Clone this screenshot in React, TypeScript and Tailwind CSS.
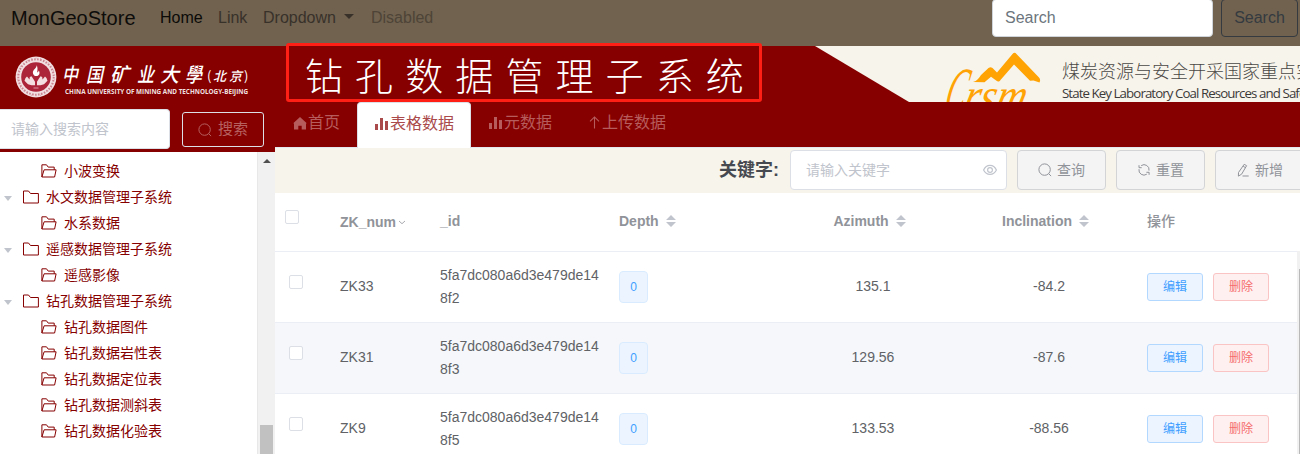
import React from "react";

const SANS = "font-['Liberation_Sans','Noto_Sans_CJK_SC',sans-serif]";

function FolderClosed() {
  return (
    <svg width="16" height="14" viewBox="0 0 16 14" fill="none" stroke="#860000" strokeWidth="1">
      <path d="M.5 13V1h5l2 2.5h7.9V13z" />
    </svg>
  );
}

function FolderOpen() {
  return (
    <svg width="16" height="14" viewBox="0 0 16 14" fill="none" stroke="#860000" strokeWidth="1">
      <path d="M.9 13V.8h4.600l1.700 2.300h6v2.700M.9 13l2.200-7.200h12L13.600 13z" />
    </svg>
  );
}

function SearchIcon() {
  return (
    <svg width="14" height="14" viewBox="0 0 14 14" fill="none" stroke="currentColor" strokeWidth="1">
      <circle cx="6.600" cy="6.600" r="5.700" />
      <path d="M10.700 10.700l2.400 2.400" />
    </svg>
  );
}

function RefreshIcon() {
  return (
    <svg width="14" height="14" viewBox="0 0 14 14" fill="none" stroke="currentColor" strokeWidth="1">
      <path d="M4.200 2.600A5 5 0 0 1 12 7.600M2 6.200a5 5 0 0 0 7.800 5M2 2.200v2.500h2.700M12.100 11.800V9.300H9.400" />
    </svg>
  );
}

function EditIcon() {
  return (
    <svg width="14" height="14" viewBox="0 0 14 14" fill="none" stroke="currentColor" strokeWidth="1">
      <path d="M8.200 1.300l2.400 1.400-5 8.500-3.200 1.900.1-3.600zM7.200 3.300l2.400 1.400M6.500 13h6.200" />
    </svg>
  );
}

function EyeIcon() {
  return (
    <svg width="14" height="12" viewBox="0 0 14 12" fill="none" stroke="#c0c4cc" strokeWidth="1.200">
      <path d="M.6 6C3.400-.1 10.600-.1 13.400 6 10.600 11.800 3.400 11.800.6 6z" />
      <circle cx="7" cy="6" r="2.400" />
    </svg>
  );
}

function BarsIcon() {
  return (
    <svg className="-mt-px" width="13" height="13" viewBox="0 0 13 13" fill="currentColor">
      <path d="M0 7h3v6H0zM5 1h3v12H5zM10 4h3v9h-3z" />
    </svg>
  );
}

function HomeIcon() {
  return (
    <svg width="14" height="13" viewBox="0 0 14 13" fill="currentColor">
      <path d="M7 0l6.500 6v.6H13v5.900H8.700V8.700H5.300v3.800H1V6.600H.5V6z" />
    </svg>
  );
}

function UpIcon() {
  return (
    <svg className="-mt-[2px]" width="13" height="13" viewBox="0 0 13 13" fill="none" stroke="currentColor" strokeWidth="1.100">
      <path d="M6.500 12.500V1M2 5.300L6.500.9 11 5.300" />
    </svg>
  );
}

function SortCarets() {
  return (
    <svg className="ml-[7px]" width="10" height="12" viewBox="0 0 10 12" fill="#c0c4cc">
      <path d="M5 0l5 5H0zM5 12L0 7h10z" />
    </svg>
  );
}

function Emblem() {
  const ring = Array.from({ length: 26 }, (_, i) => (i * 360) / 26);
  return (
    <svg width="42" height="42" viewBox="0 0 42 42">
      <circle cx="21" cy="21" r="20.400" fill="#f1dfe2" />
      <circle cx="21" cy="21" r="17.700" fill="none" stroke="#cb8591" strokeWidth="2" strokeDasharray="1.600 1.400" />
      {ring.map((a) => (
        <path key={a} d="M21 1.600v1.200" stroke="#d9a5ae" strokeWidth=".8" transform={`rotate(${a} 21 21)`} />
      ))}
      <circle cx="21" cy="21" r="14.800" fill="#ac2439" />
      <path d="M21.500 9c1 3-4.500 4.500-3.500 8.500.4 1.700 1.700 2.600 3.200 2.600 2.700 0 4.300-2.600 2.600-5.600-.5 1.600-1.300 1.700-1.700 2.200.5-2.600.8-5.700-.6-7.700z" fill="#fff" />
      <path d="M10.500 22l1.500-1.500 2.500 3 .3-2.500 1.700-.8 2 3 1.500 2.500v3.500h-3.500l-3.500-1-3.500-3.500zM31.500 22L30 20.500l-2.500 3-.3-2.500-1.700-.8-2 3-1.500 2.500v3.500h3.500l3.500-1 3.500-3.500z" fill="#f3dde1" />
      <path d="M18.500 32h5" stroke="#d992a0" strokeWidth="1" />
    </svg>
  );
}

function UniversityLogo() {
  return (
    <div className="flex h-[63px] items-start pt-[10px] pl-[15px]">
      <Emblem />
      <svg className="ml-[7px] overflow-visible" width="190" height="44" viewBox="64 56 190 44" fill="#fff" fontFamily="'Noto Sans CJK SC', sans-serif">
        <g fontSize="20" fontWeight="500" fontStyle="italic">
          <text x="62" y="82" textLength="16" lengthAdjust="spacingAndGlyphs">中</text>
          <text x="86" y="82" textLength="17" lengthAdjust="spacingAndGlyphs">国</text>
          <text x="110" y="82" textLength="19" lengthAdjust="spacingAndGlyphs">矿</text>
          <text x="137" y="82" textLength="17" lengthAdjust="spacingAndGlyphs">业</text>
          <text x="160" y="82" textLength="19" lengthAdjust="spacingAndGlyphs">大</text>
          <text x="185" y="82" textLength="17" lengthAdjust="spacingAndGlyphs">學</text>
        </g>
        <g fontSize="13">
          <text x="207" y="81">(</text>
          <text x="213" y="81" fontWeight="500" fontStyle="italic">北</text>
          <text x="229" y="81" fontWeight="500" fontStyle="italic">京</text>
          <text x="244" y="81">)</text>
        </g>
        <text x="65" y="94.300" fontSize="7" fontWeight="700" fontFamily="'Open Sans', sans-serif" fillOpacity=".9" textLength="183" lengthAdjust="spacingAndGlyphs">
          CHINA UNIVERSITY OF MINING AND TECHNOLOGY-BEIJING
        </text>
      </svg>
    </div>
  );
}

function LabLogo() {
  return (
    <svg className="shrink-0" width="485" height="56" viewBox="815 46 485 56">
      <path d="M815 46H1300V102H909z" fill="#f7f4ec" />
      <path d="M973 82c4-1 6-4 8-7l7.500-7c2-1.500 3.500-.8 5 1l3.500 3.500L1012.500 54c1.500-1.600 2.800-1.400 4 0l22.500 23.500c1.400 1.300 1.400 3 .5 5l-6-2-3.500.3L1014 64.500 1000.500 80c-1.200 1.800-2.600 2-4 .8l-5.500-4-6.500 5.500z" fill="#ffa305" />
      <text transform="translate(942 113) skewX(-14)" fill="#ffa305" fontFamily="'Liberation Serif', serif" fontStyle="italic">
        <tspan fontSize="66" textLength="20" lengthAdjust="spacingAndGlyphs">C</tspan>
        <tspan x="19" fontSize="51" textLength="62" lengthAdjust="spacingAndGlyphs">rsm</tspan>
      </text>
      <text x="1062" y="78" fontSize="18" fill="#4a4845" fontWeight="300" fontFamily="'Noto Sans CJK SC', sans-serif">煤炭资源与安全开采国家重点实验室</text>
      <text x="1062" y="98" fontSize="13.300" fill="#3c3a38" fontFamily="'Open Sans', sans-serif" letterSpacing="-0.920">State Key Laboratory Coal Resources and Safe Mining</text>
    </svg>
  );
}

const tree = [
  { label: "小波变换", parent: false },
  { label: "水文数据管理子系统", parent: true },
  { label: "水系数据", parent: false },
  { label: "遥感数据管理子系统", parent: true },
  { label: "遥感影像", parent: false },
  { label: "钻孔数据管理子系统", parent: true },
  { label: "钻孔数据图件", parent: false },
  { label: "钻孔数据岩性表", parent: false },
  { label: "钻孔数据定位表", parent: false },
  { label: "钻孔数据测斜表", parent: false },
  { label: "钻孔数据化验表", parent: false },
];

const rows = [
  { num: "ZK33", id: "5fa7dc080a6d3e479de148f2", azimuth: "135.1", inclination: "-84.2" },
  { num: "ZK31", id: "5fa7dc080a6d3e479de148f3", azimuth: "129.56", inclination: "-87.6" },
  { num: "ZK9", id: "5fa7dc080a6d3e479de148f5", azimuth: "133.53", inclination: "-88.56" },
];

const GRID = "grid w-[1022px] grid-cols-[55px_103px_176px_176px_176px_176px_160px]";

function Navbar() {
  return (
    <header className="flex h-[46px] items-start bg-[#70624f] text-base leading-6">
      <span className="ml-[11px] mt-[3px] w-[149px] text-[20px] leading-[30px] text-[#0d0c0a]">MonGeoStore</span>
      <span className="mt-[6px] w-[58px] text-[#0b0a08]">Home</span>
      <span className="mt-[6px] w-[45px] text-[#38312a]">Link</span>
      <span className="mt-[6px] flex w-[108px] items-center text-[#38312a]">
        Dropdown
        <svg className="ml-[8px] -mt-[3px]" width="10" height="5" viewBox="0 0 10 5" fill="currentColor"><path d="M0 0h10L5 5z" /></svg>
      </span>
      <span className="mt-[6px] text-[#4e4437]">Disabled</span>
      <div className="-mt-px ml-auto h-[38px] w-[221px] rounded border border-[#ced4da] bg-white px-3 py-[6px] text-[#6c757d]">Search</div>
      <div className="-mt-px ml-2 mr-[2px] h-[38px] w-[77px] rounded border border-[#343a40] py-[6px] text-center text-[#343a40]">Search</div>
    </header>
  );
}

function Sidebar() {
  return (
    <aside className="flex w-[275px] shrink-0 flex-col">
      <div className="h-[106px] bg-[#860000]">
        <UniversityLogo />
        <div className="flex">
          <div className="h-10 w-[170px] rounded-r border border-l-0 border-[#dcdfe6] bg-white pl-[11px] text-sm leading-[38px] text-[#c0c4cc]">请输入搜索内容</div>
          <div className="ml-3 mt-[3px] flex h-[35px] w-[82px] items-center justify-center gap-[6px] rounded-[3px] border border-[#dcdfe6] text-[15px] text-[#b66060]">
            <SearchIcon />
            <span>搜索</span>
          </div>
        </div>
      </div>
      <div className="flex min-h-0 flex-1">
        <div className="flex-1 pt-[6px]">
          {tree.map((n) => (
            <div key={n.label} className={n.parent ? "flex h-[26px] items-center pl-1" : "flex h-[26px] items-center pl-[41px]"}>
              {n.parent && (
                <svg className="mr-[11px] mt-[3px]" width="8" height="5" viewBox="0 0 8 5" fill="#c0c4cc"><path d="M0 0h8L4 5z" /></svg>
              )}
              <span className="-mt-px">{n.parent ? <FolderClosed /> : <FolderOpen />}</span>
              <span className="ml-[7px] text-sm text-[#860000]">{n.label}</span>
            </div>
          ))}
        </div>
        <div className="flex w-[18px] flex-col items-center border-l border-[#e8e8e8] bg-[#f1f1f1] pt-[7px]">
          <svg width="8" height="4" viewBox="0 0 8 4" fill="#505050"><path d="M4 0l4 4H0z" /></svg>
          <div className="mt-auto h-[29px] w-[13px] bg-[#c1c1c1]" />
        </div>
      </div>
    </aside>
  );
}

function Tabs() {
  return (
    <nav className="flex h-[46px] border-b border-[#e4e7ed] bg-[#860000] text-base text-[#b65c5c]">
      <div className="flex w-[82px] items-center pb-[3px] pl-[18px]"><HomeIcon /><span className="ml-px">首页</span></div>
      <div className="flex h-[46px] w-[114px] items-center rounded-t border border-b-0 border-[#dcdfe6] bg-white pb-[4px] pl-[17px] text-[#aa4a4a]"><BarsIcon /><span className="ml-[2px]">表格数据</span></div>
      <div className="flex w-[99px] items-center pb-[3px] pl-[18px]"><BarsIcon /><span className="ml-[2px]">元数据</span></div>
      <div className="flex items-center pb-[3px] pl-[18px]"><UpIcon /><span className="ml-px">上传数据</span></div>
    </nav>
  );
}

function ToolButton({ icon, label, className }: { icon: React.ReactNode; label: string; className: string }) {
  return (
    <div className={`${className} flex h-10 w-[89px] shrink-0 items-center justify-center gap-[5px] rounded border border-[#d3d4d6] bg-[#f4f4f5] text-sm text-[#909399]`}>
      {icon}
      <span>{label}</span>
    </div>
  );
}

function FilterBar() {
  return (
    <div className="flex h-[45px] shrink-0 overflow-hidden bg-[#f7f4ec] pl-[444px] pt-[2px]">
      <span className="w-[71px] shrink-0 text-lg font-bold leading-[40px] text-[#464a50]">关键字:</span>
      <div className="flex h-10 w-[217px] shrink-0 items-center justify-between rounded border border-[#dcdfe6] bg-white pl-[15px] pr-[9px] text-sm text-[#c0c4cc]">
        <span>请输入关键字</span>
        <EyeIcon />
      </div>
      <ToolButton className="ml-[10px]" icon={<SearchIcon />} label="查询" />
      <ToolButton className="ml-[10px]" icon={<RefreshIcon />} label="重置" />
      <ToolButton className="ml-[10px]" icon={<EditIcon />} label="新增" />
    </div>
  );
}

function DataTable() {
  return (
    <div className="flex min-h-0 flex-1 overflow-hidden bg-white text-sm text-[#606266]">
      <div className="w-[1022px] shrink-0">
        <div className={`${GRID} h-[59px] items-center border-b border-[#ebeef5] font-bold leading-[23px] text-[#909399]`}>
          <div className="mb-[10px] ml-[10px] size-[14px] rounded-[2px] border border-[#dcdfe6]" />
          <div className="flex items-center pl-[10px]">
            ZK_num
            <svg className="ml-[2px]" width="8" height="5" viewBox="0 0 8 5" fill="none" stroke="#909399" strokeWidth=".8"><path d="M1 1l3 2.700L7 1" /></svg>
          </div>
          <div className="-mt-[2px] pl-[7px]">_id</div>
          <div className="-mt-[2px] flex items-center pl-[10px]">Depth<SortCarets /></div>
          <div className="-mt-[2px] flex items-center justify-center pr-[7px]">Azimuth<SortCarets /></div>
          <div className="-mt-[2px] flex items-center justify-center pr-[7px]">Inclination<SortCarets /></div>
          <div className="-mt-[2px] pl-[10px]"><span className="font-medium">操作</span></div>
        </div>
        {rows.map((r, i) => (
          <div key={r.num} className={`${GRID} h-[71px] items-center border-b border-[#ebeef5] leading-[23px] ${i === 1 ? "bg-[#f5f7fa]" : "bg-white"}`}>
            <div className="mb-[10px] ml-[14px] size-[14px] rounded-[2px] border border-[#dcdfe6] bg-white" />
            <div className="-mt-px pl-[10px]">{r.num}</div>
            <div className="w-[170px] break-all pl-[7px]">{r.id}</div>
            <div className="pl-[10px]">
              <div className="h-8 w-[29px] rounded border border-[#d9ecff] bg-[#ecf5ff] text-center text-xs leading-[30px] text-[#409eff]">0</div>
            </div>
            <div className="-mt-px text-center">{r.azimuth}</div>
            <div className="-mt-px text-center">{r.inclination}</div>
            <div className="flex gap-[10px] pl-[10px] text-xs leading-[27px]">
              <div className="h-7 w-14 rounded-[3px] border border-[#b3d8ff] bg-[#ecf5ff] text-center text-[#409eff]">编辑</div>
              <div className="h-7 w-14 rounded-[3px] border border-[#fbc4c4] bg-[#fef0f0] text-center text-[#f56c6c]">删除</div>
            </div>
          </div>
        ))}
      </div>
      <div className="mt-[58px] w-[3px] bg-[#f1f1f1] pl-[2px] pt-[18px]">
        <div className="h-full w-px bg-[#b9b9b9]" />
      </div>
    </div>
  );
}

export default function App() {
  return (
    <div className={`${SANS} flex h-[454px] w-[1300px] flex-col overflow-hidden bg-white`}>
      <Navbar />
      <div className="flex min-h-0 flex-1">
        <Sidebar />
        <main className="flex w-[1025px] flex-col">
          <div className="relative flex h-14 shrink-0 bg-[#860000]">
            <h1 className="ml-[30px] w-[510px] shrink-0 whitespace-nowrap font-['Noto_Sans_CJK_SC',sans-serif] text-[38px] font-light leading-[55px] tracking-[12.1px] text-white">钻孔数据管理子系统</h1>
            <LabLogo />
            <div className="absolute -top-[3px] left-[11px] h-[59px] w-[476px] rounded-[3px] border-[3px] border-[#ff1f14]" />
          </div>
          <Tabs />
          <FilterBar />
          <DataTable />
        </main>
      </div>
    </div>
  );
}
